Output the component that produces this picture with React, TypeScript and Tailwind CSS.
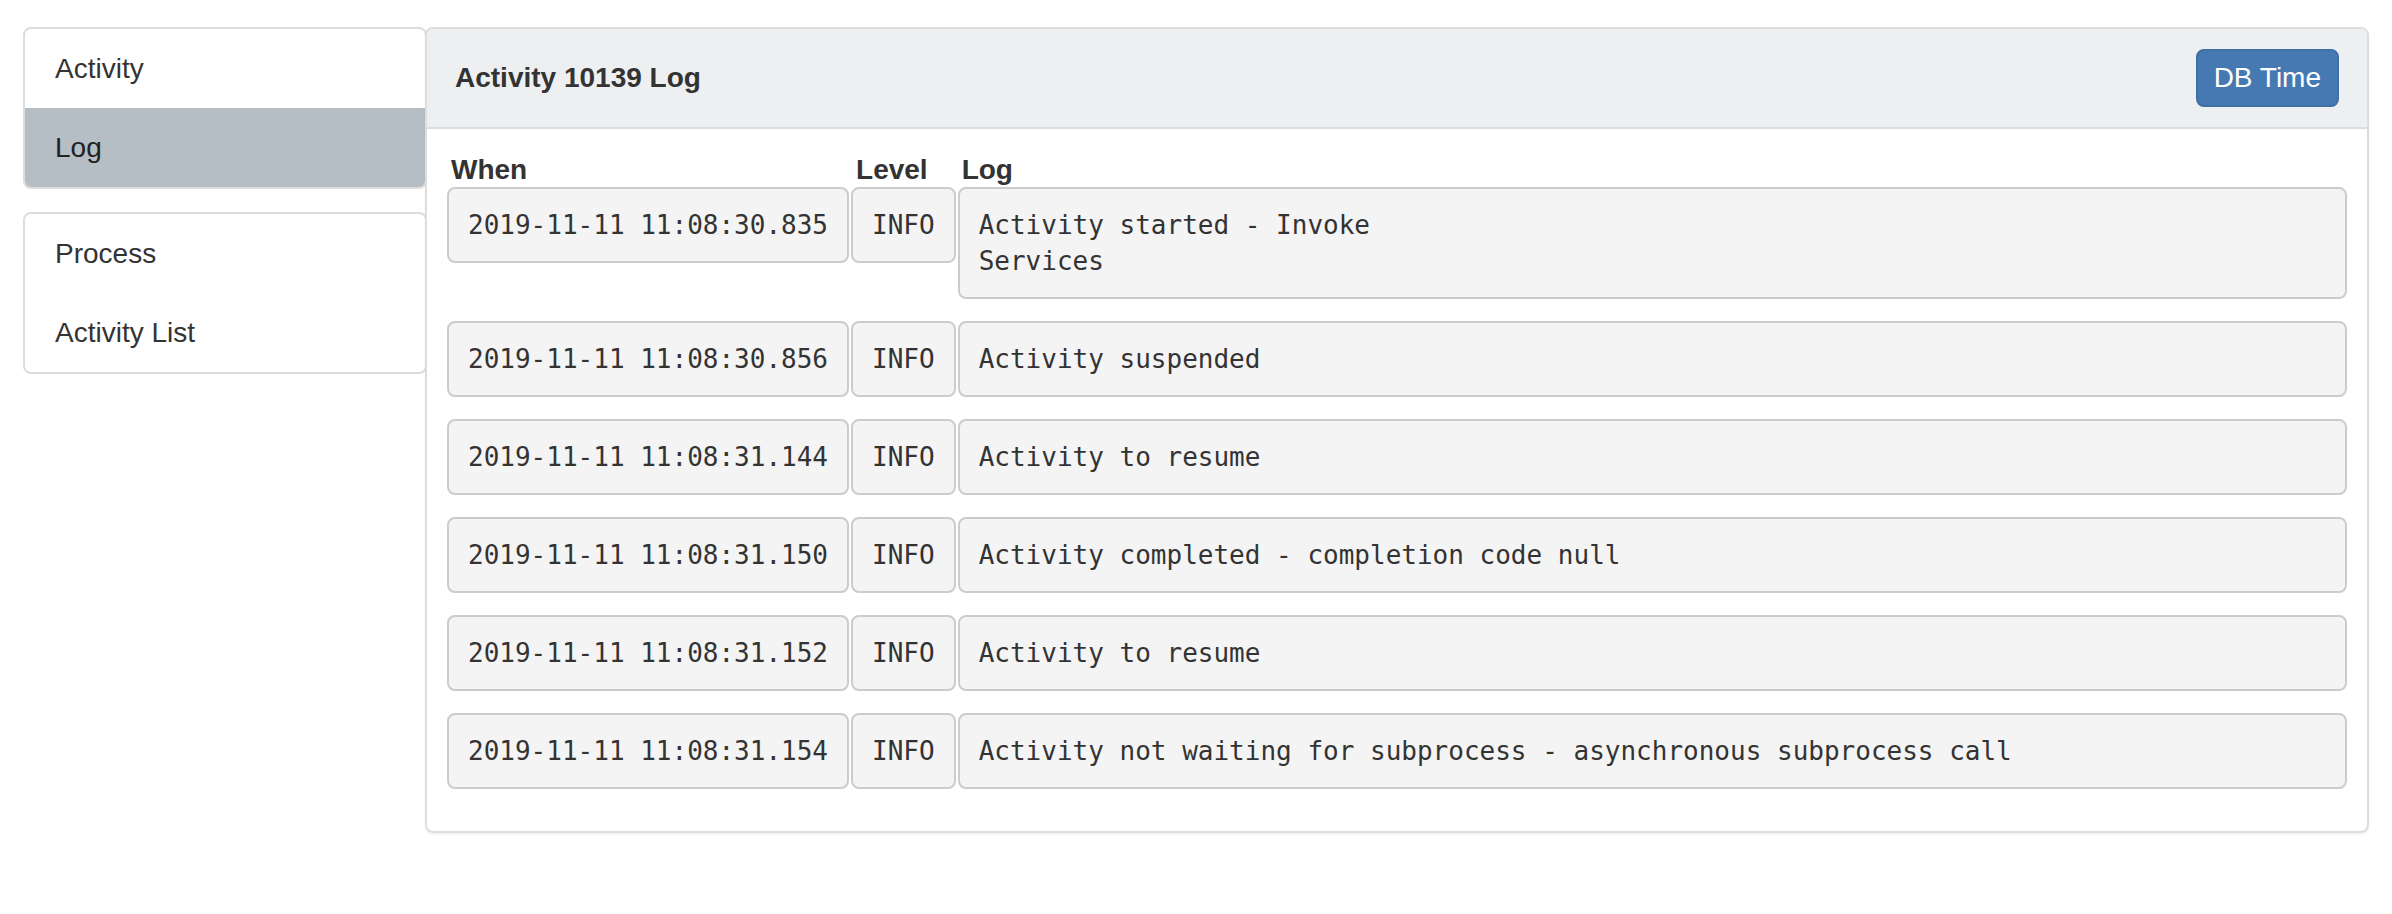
import React from "react";

const rows: { when: string; level: string; log: string }[] = [
  { when: "2019-11-11 11:08:30.835", level: "INFO", log: "Activity started - Invoke\nServices" },
  { when: "2019-11-11 11:08:30.856", level: "INFO", log: "Activity suspended" },
  { when: "2019-11-11 11:08:31.144", level: "INFO", log: "Activity to resume" },
  { when: "2019-11-11 11:08:31.150", level: "INFO", log: "Activity completed - completion code null" },
  { when: "2019-11-11 11:08:31.152", level: "INFO", log: "Activity to resume" },
  { when: "2019-11-11 11:08:31.154", level: "INFO", log: "Activity not waiting for subprocess - asynchronous subprocess call" },
];

const cell =
  "mb-[22px] whitespace-pre border-2 border-[#ccc] rounded-[8px] bg-[#f4f4f4] px-[19px] py-[18px] text-[26px] leading-[36px] text-[#333] font-['DejaVu_Sans_Mono',monospace]";

const head = "h-[40px] flex items-end text-[28px] font-bold leading-[34px] text-[#333]";

export default function App() {
  return (
    <div className="w-[2392px] h-[914px] bg-white flex items-start pt-[27px] pl-[23px] pr-[23px] text-[#333] font-['Liberation_Sans',Arial,sans-serif]">
      <div className="w-[404px] shrink-0 flex flex-col gap-[23px]">
        <div className="border-2 border-[#ddd] rounded-[8px] overflow-hidden text-[28px] leading-[40px]">
          <div className="h-[79px] flex items-center px-[30px]">Activity</div>
          <div className="h-[79px] flex items-center px-[30px] bg-[#b4bec4] text-[#222]">Log</div>
        </div>
        <div className="border-2 border-[#ddd] rounded-[8px] overflow-hidden text-[28px] leading-[40px]">
          <div className="h-[80px] flex items-center px-[30px]">Process</div>
          <div className="h-[78px] flex items-center px-[30px]">Activity List</div>
        </div>
      </div>
      <div className="relative z-10 -ml-[2px] flex-1 bg-white border-2 border-[#ddd] rounded-[8px] shadow-[0_2px_3px_rgba(0,0,0,0.05)] overflow-hidden">
        <div className="h-[100px] bg-[#eeeff1] border-b-2 border-[#ddd] flex items-center justify-between pl-[28px] pr-[28px]">
          <div className="text-[28px] font-bold leading-[40px] text-[#333]">Activity 10139 Log</div>
          <button className="h-[58px] px-[16px] rounded-[8px] bg-[#4679b2] border-2 border-[#3e6fa6] text-white text-[28px] leading-[40px]">
            DB Time
          </button>
        </div>
        <div className="pt-[18px] px-[20px] pb-[20px]">
          <div className="grid grid-cols-[auto_auto_1fr] gap-x-[2px] items-start">
            <div className={head + " pl-[4px]"}>When</div>
            <div className={head + " pl-[5px]"}>Level</div>
            <div className={head + " pl-[4px]"}>Log</div>
            {rows.map((r, i) => (
              <React.Fragment key={i}>
                <div className={cell}>{r.when}</div>
                <div className={cell}>{r.level}</div>
                <div className={cell}>{r.log}</div>
              </React.Fragment>
            ))}
          </div>
        </div>
      </div>
    </div>
  );
}
